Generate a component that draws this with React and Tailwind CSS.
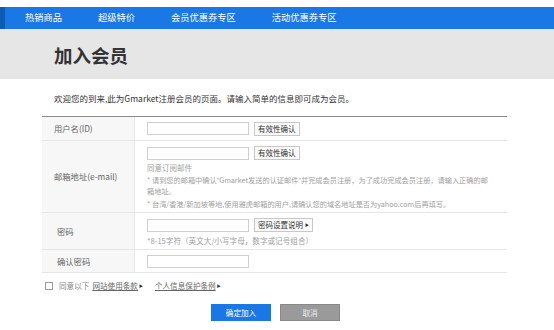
export default function App() {
  const font = "font-['Noto_Sans_CJK_SC','Noto_Sans',sans-serif]";
  const navItems = ["热销商品", "超级特价", "会员优惠券专区", "活动优惠券专区"];
  const Input = () => (
    <div className="w-[102px] h-[13px] border border-[#cfcfcf] bg-white" />
  );
  const Btn = ({ children }) => (
    <div className="ml-[5px] h-[14px] px-[3px] border border-[#c8c8c8] bg-[#fafafa] text-[7.5px] leading-[12px] text-[#333] flex items-center whitespace-nowrap">
      {children}
    </div>
  );
  const Label = ({ children }) => (
    <div className="w-[93px] shrink-0 bg-[#f7f7f7] border-r border-[#e6e6e6] pl-[12px] flex items-center text-[8.3px] text-[#666]">
      {children}
    </div>
  );
  const Q = ({ children }) => (
    <span className="font-['Liberation_Sans',sans-serif]">{children}</span>
  );
  return (
    <div className={`w-[554px] h-[330px] bg-white overflow-hidden ${font}`}>
      <div className="h-[7px]" />
      <nav className="h-[22px] bg-[#1a78e6] flex items-center">
        <div className="w-[5px] h-full bg-[#0c5cb4]" />
        <div className="flex gap-[36px] pl-[20px] text-white text-[9.25px] leading-none">
          {navItems.map((t) => (
            <span key={t}>{t}</span>
          ))}
        </div>
      </nav>
      <div className="h-[50px] bg-[#e6e6e6] flex items-center pl-[54px] pt-[3px]">
        <h1 className="text-[18.5px] font-bold text-[#333] leading-none">加入会员</h1>
      </div>
      <div className="pl-[42px] w-[507px]">
        <p className="pl-[12px] mt-[14px] text-[8.5px] leading-[10px] text-[#333] whitespace-nowrap">
          欢迎您的到来,此为Gmarket注册会员的页面。请输入简单的信息即可成为会员。
        </p>
        <div className="mt-[13px] border-t border-[#8a8a8a]">
          <div className="flex h-[24px] border-b border-[#e6e6e6]">
            <Label>用户名(ID)</Label>
            <div className="pl-[12px] flex items-center">
              <Input />
              <Btn>有效性确认</Btn>
            </div>
          </div>
          <div className="flex h-[72px] border-b border-[#e6e6e6]">
            <Label>邮箱地址(e-mail)</Label>
            <div className="pl-[12px] pt-[5px] flex-1">
              <div className="flex items-center">
                <Input />
                <Btn>有效性确认</Btn>
              </div>
              <div className="mt-[3px] text-[7.2px] leading-[10px] text-[#a0a0a0] whitespace-nowrap">
                <div className="text-[7.5px]">同意订阅邮件</div>
                <div className="mt-[2px]">
                  * 请到您的邮箱中确认<Q>"</Q>Gmarket发送的认证邮件<Q>"</Q>并完成会员注册，为了成功完成会员注册，请输入正确的邮
                </div>
                <div>箱地址。</div>
                <div className="mt-[3px]">
                  * 台湾/香港/新加坡等地,使用雅虎邮箱的用户,请确认您的域名地址是否为yahoo.com后再填写。
                </div>
              </div>
            </div>
          </div>
          <div className="flex h-[37px] border-b border-[#e6e6e6]">
            <Label>
              <span className="pl-[3px]">密码</span>
            </Label>
            <div className="pl-[12px] pt-[5px]">
              <div className="flex items-center">
                <Input />
                <Btn>
                  密码设置说明<span className="ml-[2px] text-[4px]">▶</span>
                </Btn>
              </div>
              <div className="mt-[4px] text-[7.6px] leading-[10px] text-[#a0a0a0] whitespace-nowrap">
                *8-15字符（英文大/小写字母，数字或记号组合）
              </div>
            </div>
          </div>
          <div className="flex h-[23px] border-b border-[#e6e6e6]">
            <Label>
              <span className="pl-[3px]">确认密码</span>
            </Label>
            <div className="pl-[12px] flex items-center">
              <Input />
            </div>
          </div>
        </div>
        <div className="mt-[8px] flex items-center pl-[3px] text-[7.6px] leading-[10px] text-[#888] whitespace-nowrap">
          <div className="w-[8px] h-[8px] border border-[#999] bg-white" />
          <span className="ml-[6px]">同意以下</span>
          <span className="ml-[3px] underline text-[#666]">网站使用条款</span>
          <span className="ml-[1px] text-[4px] text-[#333]">▶</span>
          <span className="ml-[12px] underline text-[#666]">个人信息保护条例</span>
          <span className="ml-[1px] text-[4px] text-[#333]">▶</span>
        </div>
      </div>
      <div className="mt-[13px] flex pl-[211px] gap-[9px]">
        <div className="w-[60px] h-[17px] bg-[#1a78e6] text-white text-[7.6px] flex items-center justify-center">
          确定加入
        </div>
        <div className="w-[60px] h-[17px] bg-[#9a9a9a] border border-[#888] text-[#eee] text-[7.6px] flex items-center justify-center">
          取消
        </div>
      </div>
    </div>
  );
}
